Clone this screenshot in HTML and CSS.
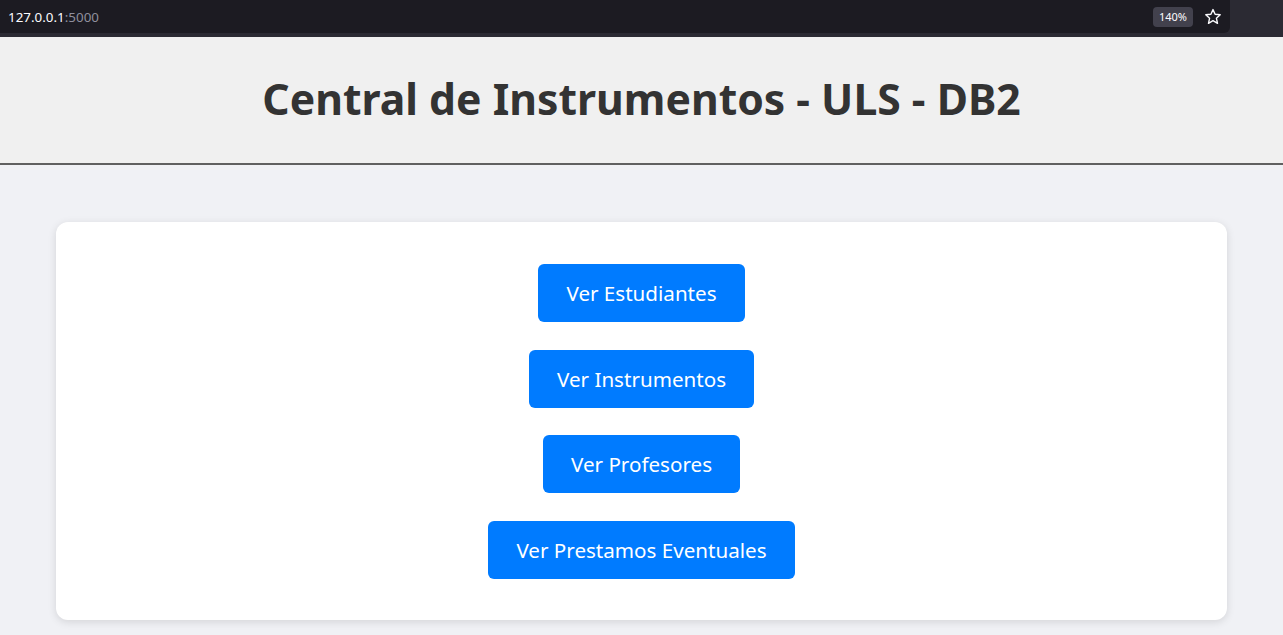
FILE: index.html
```html
<!DOCTYPE html>
<html lang="es">
<head>
<meta charset="utf-8">
<title>Central de Instrumentos - ULS - DB2</title>
<link rel="stylesheet" href="styles.css">
</head>
<body>
<div class="chrome">
  <div class="urlbar">
    <span class="url">127.0.0.1<span class="port">:5000</span></span>
    <span class="zoom">140%</span>
    <svg class="star" width="18" height="18" viewBox="0 0 18 18"><path d="M9 1.6 L11.1 6.3 L16.2 6.8 L12.4 10.2 L13.5 15.3 L9 12.7 L4.5 15.3 L5.6 10.2 L1.8 6.8 L6.9 6.3 Z" fill="none" stroke="#fbfbfe" stroke-width="1.4" stroke-linejoin="round"/></svg>
  </div>
</div>
<header class="header">
  <h1 class="title">Central de Instrumentos - ULS - DB2</h1>
</header>
<main class="container">
  <div class="card">
    <a class="btn" href="#">Ver Estudiantes</a>
    <a class="btn" href="#">Ver Instrumentos</a>
    <a class="btn" href="#">Ver Profesores</a>
    <a class="btn" href="#">Ver Prestamos Eventuales</a>
  </div>
</main>
</body>
</html>
```
FILE: styles.css
```css
* { box-sizing: border-box; }
html, body { margin: 0; padding: 0; }
body {
  background: #f0f1f5;
  font-family: "Noto Sans", "Open Sans", sans-serif;
  height: 635px;
  overflow: hidden;
}
.chrome {
  height: 37px;
  background: #2b2a33;
  padding-right: 53px;
}
.urlbar {
  height: 33px;
  background: #1c1b22;
  border-bottom-right-radius: 6px;
  display: flex;
  align-items: center;
  padding-left: 8px;
  padding-right: 8px;
}
.url {
  color: #fbfbfe;
  font-size: 13.4px;
  flex: 1;
}
.port { color: #8f8f9d; }
.zoom {
  background: #42414d;
  color: #fbfbfe;
  font-size: 11px;
  height: 20px;
  line-height: 20px;
  padding: 0 6px;
  border-radius: 4px;
  margin-right: 11px;
}
.star { display: block; }
.header {
  background: #f0f0f0;
  height: 128px;
  border-bottom: 2px solid #606060;
  display: flex;
  align-items: center;
  justify-content: center;
}
.title {
  margin: 0;
  color: #333;
  font-size: 42.7px;
  font-weight: 700;
  padding-bottom: 4px;
}
.container {
  padding: 57px 56px 0;
}
.card {
  background: #fff;
  border-radius: 12px;
  box-shadow: 0 2px 8px rgba(0,0,0,0.12);
  padding: 42px 0 41px;
  display: flex;
  flex-direction: column;
  align-items: center;
  gap: 27.7px;
}
.btn {
  display: block;
  background: #007bff;
  color: #fff;
  text-decoration: none;
  font-size: 20.6px;
  line-height: 30px;
  padding: 14px 28px;
  border-radius: 6px;
}
```
